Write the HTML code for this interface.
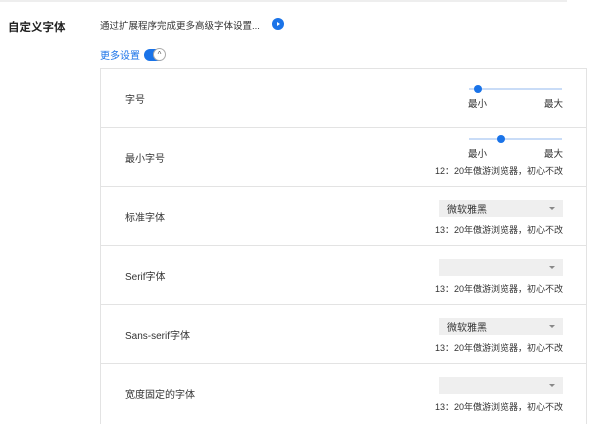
<!DOCTYPE html>
<html><head><meta charset="utf-8"><style>
*{margin:0;padding:0;box-sizing:border-box}
body{width:600px;height:430px;background:#fff;font-family:"Liberation Sans","Noto Sans CJK SC",sans-serif;color:#333;position:relative;overflow:hidden}
.a{position:absolute;white-space:nowrap}
.topline{left:0;top:0;width:567px;height:2px;background:#eee}
.box{left:100px;top:68px;width:487px;height:356px;border:1px solid #e3e3e3;border-bottom:none}
.row{position:absolute;left:0;width:485px;height:59px;border-bottom:1px solid #e3e3e3}
.lbl{position:absolute;left:24px;font-size:10px;color:#333}
.track{position:absolute;left:368px;width:93px;height:2px;background:#c9dcf7}
.dot{position:absolute;width:8px;height:8px;border-radius:50%;background:#1a73e8;top:-3px}
.mm{position:absolute;font-size:9.5px;color:#333}
.desc{position:absolute;right:23px;font-size:9px;color:#333}
.sel{position:absolute;left:338px;width:124px;height:17px;background:#efefef;font-size:10px;padding:1px 0 0 8px;color:#333}
.sel:after{content:"";position:absolute;right:8px;top:7px;border:3px solid transparent;border-top:3px solid #888}
</style></head><body>
<div class="a topline"></div>
<div class="a" style="left:8px;top:19px;font-size:11.5px;font-weight:bold;color:#222">自定义字体</div>
<div class="a" style="left:100px;top:18px;font-size:9.5px;color:#333">通过扩展程序完成更多高级字体设置...</div>
<div class="a" style="left:272px;top:18px;width:12px;height:12px;border-radius:50%;background:#1a73e8"><div style="position:absolute;left:5px;top:3.5px;border-left:3px solid #fff;border-top:2.5px solid transparent;border-bottom:2.5px solid transparent"></div></div>
<div class="a" style="left:100px;top:47px;font-size:10px;color:#1a73e8">更多设置</div>
<div class="a" style="left:144px;top:49px;width:21px;height:12px;border-radius:6px;background:#1a73e8"></div>
<div class="a" style="left:153px;top:48px;width:13px;height:13px;border-radius:50%;background:#fff;border:1px solid #aaa;font-size:8px;text-align:center;line-height:11px;color:#555">^</div>
<div class="a box">
 <div class="row" style="top:0"><div class="lbl" style="top:22px">字号</div>
  <div class="track" style="top:19px"><div class="dot" style="left:5px"></div></div>
  <div class="mm" style="left:367px;top:27px">最小</div><div class="mm" style="left:443px;top:27px">最大</div></div>
 <div class="row" style="top:59px"><div class="lbl" style="top:22px">最小字号</div>
  <div class="track" style="top:10px"><div class="dot" style="left:28px"></div></div>
  <div class="mm" style="left:367px;top:18px">最小</div><div class="mm" style="left:443px;top:18px">最大</div>
  <div class="desc" style="top:36px">12：20年傲游浏览器，初心不改</div></div>
 <div class="row" style="top:118px"><div class="lbl" style="top:22px">标准字体</div>
  <div class="sel" style="top:13px">微软雅黑</div><div class="desc" style="top:36px">13：20年傲游浏览器，初心不改</div></div>
 <div class="row" style="top:177px"><div class="lbl" style="top:22px">Serif字体</div>
  <div class="sel" style="top:13px"></div><div class="desc" style="top:36px">13：20年傲游浏览器，初心不改</div></div>
 <div class="row" style="top:236px"><div class="lbl" style="top:22px">Sans-serif字体</div>
  <div class="sel" style="top:13px">微软雅黑</div><div class="desc" style="top:36px">13：20年傲游浏览器，初心不改</div></div>
 <div class="row" style="top:295px;border-bottom:none"><div class="lbl" style="top:22px">宽度固定的字体</div>
  <div class="sel" style="top:13px"></div><div class="desc" style="top:36px">13：20年傲游浏览器，初心不改</div></div>
</div>
</body></html>
